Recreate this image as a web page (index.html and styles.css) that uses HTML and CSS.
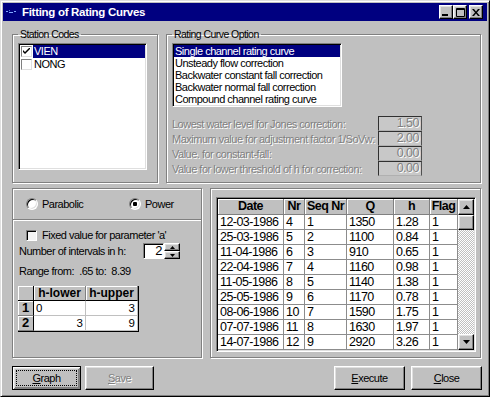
FILE: index.html
```html
<!DOCTYPE html>
<html>
<head>
  <title>Fitting of Rating Curves</title>
  <link rel="stylesheet" href="styles.css">
</head>
<body>
  <div class="window">
    <div class="titlebar">
      <svg class="title-icon" width="14" height="14" viewBox="0 0 14 14">
        <rect x="1" y="6" width="2" height="1" fill="#7fa8ff"/>
        <rect x="4" y="7" width="4" height="1" fill="#7fa8ff"/>
        <rect x="9" y="6" width="2" height="1" fill="#7fa8ff"/>
        <rect x="4" y="5" width="1" height="1" fill="#4f78d8"/>
      </svg>
      <span class="title">Fitting of Rating Curves</span>
      <div class="title-buttons">
        <span class="tbtn">
          <svg width="8" height="7" viewBox="0 0 8 7"><rect x="0" y="5" width="6" height="2" fill="#000"/></svg>
        </span>
        <span class="tbtn">
          <svg width="9" height="9" viewBox="0 0 9 9"><path d="M0.5 0.5h8v8h-8z M0 1.5h9" fill="none" stroke="#000"/></svg>
        </span>
        <span class="tbtn close">
          <svg width="8" height="7" viewBox="0 0 8 7"><path d="M0 0h2l2 2.5l2-2.5h2l-3 3.5l3 3.5h-2l-2-2.5l-2 2.5h-2l3-3.5z" fill="#000"/></svg>
        </span>
      </div>
    </div>

    <div class="client">
      <div class="top-row">
        <fieldset class="group station">
          <legend>Station Codes</legend>
          <div class="listbox station-list">
            <div class="station-item">
              <span class="chk">
                <svg width="7" height="7" viewBox="0 0 7 7"><path d="M0 2l2 2l5-5v2l-5 5l-2-2z" fill="#000"/></svg>
              </span>
              <span class="station-name selected">VIEN</span>
            </div>
            <div class="station-item">
              <span class="chk"></span>
              <span class="station-name">NONG</span>
            </div>
          </div>
        </fieldset>

        <fieldset class="group rating">
          <legend>Rating Curve Option</legend>
          <div class="listbox rating-list">
            <div class="rating-item selected">Single channel rating curve</div>
            <div class="rating-item">Unsteady flow correction</div>
            <div class="rating-item">Backwater constant fall correction</div>
            <div class="rating-item">Backwater normal fall correction</div>
            <div class="rating-item">Compound channel rating curve</div>
          </div>
          <div class="params">
            <div class="param-row">
              <span class="param-label">Lowest water level for Jones correction:</span>
              <span class="field">1.50</span>
            </div>
            <div class="param-row">
              <span class="param-label">Maximum value for adjustment factor 1/SoVw:</span>
              <span class="field">2.00</span>
            </div>
            <div class="param-row">
              <span class="param-label">Value. for constant-fall:</span>
              <span class="field">0.00</span>
            </div>
            <div class="param-row">
              <span class="param-label">Value for lower threshold of h for correction:</span>
              <span class="field">0.00</span>
            </div>
          </div>
        </fieldset>
      </div>

      <div class="mid-row">
        <div class="panel method">
          <div class="radio-row">
            <span class="radio-opt"><span class="radio"></span>Parabolic</span>
            <span class="radio-opt"><span class="radio on"></span>Power</span>
          </div>
          <div class="options">
            <div class="check-row"><span class="box"></span>Fixed value for parameter 'a'</div>
            <div class="interval-row">
              <span class="interval-label">Number of intervals in h:</span>
              <span class="spin-edit">2</span>
              <span class="spin-btns">
                <span class="spin-btn"><svg width="5" height="3" viewBox="0 0 5 3"><path d="M2.5 0L5 3H0z" fill="#000"/></svg></span>
                <span class="spin-btn"><svg width="5" height="3" viewBox="0 0 5 3"><path d="M0 0h5L2.5 3z" fill="#000"/></svg></span>
              </span>
            </div>
            <div class="range-row">Range from:&nbsp; .65 to:&nbsp; 8.39</div>
            <table class="small-grid">
              <colgroup><col class="c-num"><col class="c-lo"><col class="c-up"></colgroup>
              <tr><th></th><th>h-lower</th><th>h-upper</th></tr>
              <tr><th>1</th><td>0</td><td class="num">3</td></tr>
              <tr><th>2</th><td class="num">3</td><td class="num">9</td></tr>
            </table>
          </div>
        </div>

        <div class="panel data">
          <div class="grid-frame">
            <table class="data-grid">
              <colgroup>
                <col class="c-date"><col class="c-nr"><col class="c-seq"><col class="c-q"><col class="c-h"><col class="c-flag">
              </colgroup>
              <tr><th>Date</th><th>Nr</th><th>Seq Nr</th><th>Q</th><th>h</th><th>Flag</th></tr>
              <tr><td>12-03-1986</td><td>4</td><td>1</td><td>1350</td><td>1.28</td><td>1</td></tr>
              <tr><td>25-03-1986</td><td>5</td><td>2</td><td>1100</td><td>0.84</td><td>1</td></tr>
              <tr><td>11-04-1986</td><td>6</td><td>3</td><td>910</td><td>0.65</td><td>1</td></tr>
              <tr><td>22-04-1986</td><td>7</td><td>4</td><td>1160</td><td>0.98</td><td>1</td></tr>
              <tr><td>11-05-1986</td><td>8</td><td>5</td><td>1140</td><td>1.38</td><td>1</td></tr>
              <tr><td>25-05-1986</td><td>9</td><td>6</td><td>1170</td><td>0.78</td><td>1</td></tr>
              <tr><td>08-06-1986</td><td>10</td><td>7</td><td>1590</td><td>1.75</td><td>1</td></tr>
              <tr><td>07-07-1986</td><td>11</td><td>8</td><td>1630</td><td>1.97</td><td>1</td></tr>
              <tr><td>14-07-1986</td><td>12</td><td>9</td><td>2920</td><td>3.26</td><td>1</td></tr>
            </table>
            <div class="vscroll">
              <span class="sb-btn"><svg width="7" height="4" viewBox="0 0 7 4"><path d="M3.5 0L7 4H0z" fill="#000"/></svg></span>
              <span class="sb-thumb"></span>
              <span class="sb-track"></span>
              <span class="sb-btn"><svg width="7" height="4" viewBox="0 0 7 4"><path d="M0 0h7L3.5 4z" fill="#000"/></svg></span>
            </div>
          </div>
        </div>
      </div>

      <div class="button-row">
        <button class="btn default"><span class="focus"><u>G</u>raph</span></button>
        <button class="btn disabled"><span class="focus"><u>S</u>ave</span></button>
        <span class="spacer"></span>
        <button class="btn wide"><span class="focus"><u>E</u>xecute</span></button>
        <button class="btn wide"><span class="focus"><u>C</u>lose</span></button>
      </div>
    </div>
  </div>
</body>
</html>
```

FILE: styles.css
```css
:root {
  --face: #c0c0c0;
  --shadow: #808080;
  --light: #dfdfdf;
  --hilite: #ffffff;
  --dark: #000000;
  --navy: #000080;
  --grid-line: #8c8c8c;
  --ui-font: "Liberation Sans", Arial, sans-serif;
}

* {
  box-sizing: border-box;
}

body {
  margin: 0;
  background: var(--face);
  font-family: var(--ui-font);
  font-size: 11px;
  letter-spacing: -0.5px;
  color: #000;
}

/* Window frame */
.window {
  width: 490px;
  height: 397px;
  border: 1px solid;
  border-color: var(--light) var(--dark) var(--dark) var(--light);
  box-shadow: inset 1px 1px var(--hilite), inset -1px -1px var(--shadow);
  padding: 2px;
  display: flex;
  flex-direction: column;
}

.titlebar {
  height: 18px;
  background: var(--navy);
  color: #fff;
  display: flex;
  align-items: center;
  padding: 0 4px 0 2px;
}

.title-icon {
  margin-right: 3px;
}

.title {
  flex: 1;
  font-weight: bold;
  font-size: 11.5px;
  letter-spacing: -0.3px;
}

.title-buttons {
  display: flex;
}

.tbtn,
.spin-btn,
.sb-btn,
.sb-thumb {
  background: var(--face);
  border: 1px solid;
  border-color: var(--hilite) var(--dark) var(--dark) var(--hilite);
  box-shadow: inset -1px -1px var(--shadow), inset 1px 1px var(--light);
  display: flex;
  align-items: center;
  justify-content: center;
}

.tbtn {
  width: 14px;
  height: 14px;
}

.tbtn.close {
  margin-left: 2px;
}

.client {
  flex: 1;
  padding: 6px 6px 0 9px;
  display: flex;
  flex-direction: column;
}

/* Group boxes */
.top-row {
  display: flex;
  gap: 8px;
}

.group {
  margin: 0;
  padding: 2px 5px 5px 5px;
  height: 156px;
  min-width: 0;
  border: 1px solid var(--shadow);
  box-shadow: inset 1px 1px var(--hilite), 1px 1px var(--hilite);
}

.group legend {
  padding: 0 2px;
  font-size: 10.5px;
  letter-spacing: -0.55px;
  line-height: 14px;
}

.station {
  width: 146px;
}

.rating {
  width: 315px;
}

.listbox {
  background: #fff;
  border: 1px solid;
  border-color: var(--shadow) var(--hilite) var(--hilite) var(--shadow);
  box-shadow: inset 1px 1px var(--dark), inset -1px -1px var(--light);
  padding: 1px;
}

.station-list {
  width: 129px;
  height: 127px;
}

.station-item {
  display: flex;
  align-items: center;
  height: 13px;
  padding-left: 1px;
}

.chk {
  width: 11px;
  height: 11px;
  margin-right: 1px;
  background: #fff;
  border: 1px solid;
  border-color: var(--shadow) var(--light) var(--light) var(--shadow);
  display: flex;
  align-items: center;
  justify-content: center;
}

.station-name {
  flex: 1;
  padding-left: 1px;
  line-height: 13px;
}

.selected {
  background: var(--navy);
  color: #fff;
}

.rating-list {
  width: 170px;
  height: 64px;
}

.rating-item {
  line-height: 12px;
  padding-left: 1px;
  white-space: nowrap;
}

.params {
  margin-top: 9px;
}

.param-row {
  display: flex;
  align-items: center;
  height: 15px;
}

.param-label {
  width: 206px;
  color: var(--shadow);
  text-shadow: 1px 1px var(--hilite);
  white-space: nowrap;
}

.field {
  width: 44px;
  height: 15px;
  border: 1px solid #303030;
  border-bottom-color: #b0b0b0;
  border-right-color: #505050;
  background: #c8c8c8;
  color: var(--shadow);
  text-shadow: 1px 1px var(--hilite);
  font-size: 12.5px;
  line-height: 13px;
  text-align: right;
  padding-right: 2px;
}

/* Lower panels */
.mid-row {
  display: flex;
  gap: 8px;
  margin-top: 5px;
}

.panel {
  height: 170px;
  border: 1px solid var(--shadow);
  box-shadow: inset 1px 1px var(--hilite), 1px 1px var(--hilite);
}

.method {
  width: 190px;
}

.data {
  width: 271px;
  padding: 8px 0 0 5px;
}

.radio-row {
  height: 31px;
  display: flex;
  align-items: center;
  padding-left: 13px;
  border-bottom: 1px solid var(--shadow);
  box-shadow: 0 1px var(--hilite);
}

.radio-opt {
  display: flex;
  flex: none;
  align-items: center;
  gap: 4px;
  width: 103px;
}

.radio {
  width: 12px;
  height: 12px;
  flex: none;
  border-radius: 50%;
  background: #fff;
  border: 1px solid;
  border-color: var(--shadow) var(--hilite) var(--hilite) var(--shadow);
  box-shadow: inset 1px 1px var(--dark), inset -1px -1px var(--light);
}

.radio.on {
  background: radial-gradient(circle, #000 0, #000 2px, #fff 2.5px);
}

.options {
  padding: 8px 0 0 6px;
}

.check-row {
  display: flex;
  align-items: center;
  gap: 5px;
  height: 14px;
  margin-left: 7px;
}

.box {
  width: 11px;
  height: 11px;
  background: #f4f4f4;
  border: 1px solid;
  border-color: var(--shadow) var(--hilite) var(--hilite) var(--shadow);
  box-shadow: inset 1px 1px var(--dark);
}

.interval-row {
  display: flex;
  align-items: center;
  height: 16px;
  margin-top: 1px;
}

.interval-label {
  width: 124px;
  white-space: nowrap;
}

.spin-edit {
  width: 21px;
  height: 16px;
  background: #fff;
  border: 1px solid;
  border-color: var(--shadow) var(--hilite) var(--hilite) var(--shadow);
  box-shadow: inset 1px 1px var(--dark);
  font-size: 13px;
  line-height: 14px;
  text-align: right;
  padding-right: 1px;
}

.spin-btns {
  display: flex;
  flex-direction: column;
}

.spin-btn {
  width: 16px;
  height: 8px;
}

.range-row {
  margin-top: 5px;
  line-height: 14px;
  white-space: nowrap;
}

/* Interval grid */
.small-grid {
  margin: 8px 0 0 -1px;
  border-collapse: separate;
  border-spacing: 0;
  table-layout: fixed;
  width: 120px;
  border-right: 1px solid var(--dark);
  border-bottom: 1px solid var(--dark);
  font-size: 11.5px;
  letter-spacing: 0;
}

.small-grid .c-num { width: 16px; }
.small-grid .c-lo { width: 52px; }
.small-grid .c-up { width: 52px; }

.small-grid th {
  background: var(--face);
  font-weight: bold;
  line-height: 14px;
  padding: 0;
  border-right: 1px solid var(--shadow);
  border-bottom: 1px solid var(--shadow);
  box-shadow: inset 1px 1px var(--hilite);
}

.small-grid tr:first-child th {
  font-size: 12px;
  border-bottom-color: var(--dark);
}

.small-grid td {
  background: #fff;
  line-height: 13px;
  padding: 0 2px;
  border-right: 1px solid var(--face);
  border-bottom: 1px solid var(--face);
}

.small-grid tr > th:first-child {
  font-size: 13px;
  border-right-color: var(--dark);
}

.small-grid .num {
  text-align: right;
}

/* Data grid */
.grid-frame {
  width: 260px;
  height: 155px;
  display: flex;
  overflow: hidden;
  background: #fff;
  border: 1px solid;
  border-color: var(--shadow) var(--hilite) var(--hilite) var(--shadow);
  box-shadow: inset 1px 1px var(--dark), inset -1px -1px var(--light);
  padding: 1px;
}

.data-grid {
  width: 240px;
  flex: none;
  table-layout: fixed;
  border-collapse: separate;
  border-spacing: 0;
  font-size: 12.5px;
  letter-spacing: -0.55px;
  align-self: flex-start;
}

.data-grid .c-date { width: 66px; }
.data-grid .c-nr { width: 21px; }
.data-grid .c-seq { width: 42px; }
.data-grid .c-q { width: 47px; }
.data-grid .c-h { width: 36px; }
.data-grid .c-flag { width: 28px; }

.data-grid th {
  background: var(--face);
  line-height: 15px;
  padding: 0;
  border-right: 1px solid var(--shadow);
  border-bottom: 1px solid var(--shadow);
  box-shadow: inset 1px 1px var(--hilite);
  white-space: nowrap;
}

.data-grid td {
  background: #fff;
  line-height: 14px;
  padding: 0 0 0 2px;
  border-right: 1px solid var(--grid-line);
  border-bottom: 1px solid var(--grid-line);
  white-space: nowrap;
  overflow: hidden;
}

.vscroll {
  width: 16px;
  display: flex;
  flex-direction: column;
}

.sb-btn {
  height: 16px;
}

.sb-thumb {
  height: 15px;
}

.sb-track {
  flex: 1;
  background: repeating-conic-gradient(var(--face) 0 25%, var(--hilite) 0 50%) 0 0 / 2px 2px;
}

/* Dialog buttons */
.button-row {
  display: flex;
  gap: 4px;
  margin-top: 8px;
  margin-right: -1px;
}

.spacer {
  flex: 1;
}

.btn {
  width: 69px;
  height: 24px;
  padding: 3px;
  margin: 0;
  background: var(--face);
  border: 1px solid;
  border-color: var(--hilite) var(--dark) var(--dark) var(--hilite);
  box-shadow: inset -1px -1px var(--shadow), inset 1px 1px var(--light);
  font-family: var(--ui-font);
  font-size: 11px;
  letter-spacing: -0.5px;
  color: #000;
  display: flex;
}

.btn.wide {
  width: 71px;
}

.btn.wide + .btn.wide {
  margin-left: 2px;
}

.btn .focus {
  flex: 1;
  display: flex;
  align-items: center;
  justify-content: center;
  border: 1px dotted transparent;
}

.btn.default {
  border-color: var(--dark);
  box-shadow: inset 1px 1px var(--hilite), inset -1px -1px var(--shadow), inset 2px 2px var(--light), inset -2px -2px var(--shadow);
}

.btn.default .focus {
  border-color: var(--dark);
}

.btn.disabled {
  color: var(--shadow);
  text-shadow: 1px 1px var(--hilite);
}
```
